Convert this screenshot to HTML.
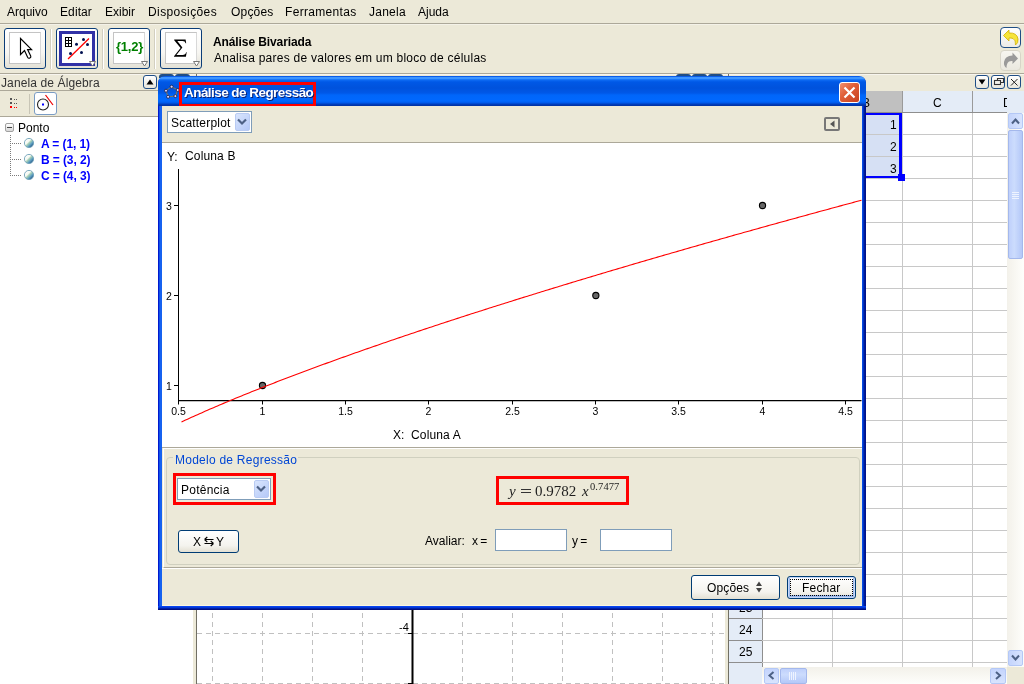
<!DOCTYPE html><html><head><meta charset="utf-8"><style>
html,body{margin:0;padding:0;}
body{width:1024px;height:684px;overflow:hidden;position:relative;background:#ECE9D8;font-family:"Liberation Sans",sans-serif;}
div{box-sizing:border-box;}
svg{position:absolute;overflow:visible;}
</style></head><body>
<div style="position:absolute;left:7px;top:6.13px;font:400 12px/13.80px 'Liberation Sans', sans-serif;color:#000;white-space:pre;will-change:transform;letter-spacing:0px;">Arquivo</div>
<div style="position:absolute;left:60px;top:6.13px;font:400 12px/13.80px 'Liberation Sans', sans-serif;color:#000;white-space:pre;will-change:transform;letter-spacing:0.1px;">Editar</div>
<div style="position:absolute;left:105px;top:6.13px;font:400 12px/13.80px 'Liberation Sans', sans-serif;color:#000;white-space:pre;will-change:transform;letter-spacing:0px;">Exibir</div>
<div style="position:absolute;left:148px;top:6.13px;font:400 12px/13.80px 'Liberation Sans', sans-serif;color:#000;white-space:pre;will-change:transform;letter-spacing:0.4px;">Disposições</div>
<div style="position:absolute;left:230.7px;top:6.13px;font:400 12px/13.80px 'Liberation Sans', sans-serif;color:#000;white-space:pre;will-change:transform;letter-spacing:0.2px;">Opções</div>
<div style="position:absolute;left:285px;top:6.13px;font:400 12px/13.80px 'Liberation Sans', sans-serif;color:#000;white-space:pre;will-change:transform;letter-spacing:0.32px;">Ferramentas</div>
<div style="position:absolute;left:369px;top:6.13px;font:400 12px/13.80px 'Liberation Sans', sans-serif;color:#000;white-space:pre;will-change:transform;letter-spacing:0.25px;">Janela</div>
<div style="position:absolute;left:418px;top:6.13px;font:400 12px/13.80px 'Liberation Sans', sans-serif;color:#000;white-space:pre;will-change:transform;letter-spacing:0px;">Ajuda</div>
<div style="position:absolute;left:0px;top:23px;width:1024px;height:1px;background:#ACA899"></div>
<div style="position:absolute;left:0px;top:24px;width:1024px;height:1px;background:#F4F2E8"></div>
<div style="position:absolute;left:4px;top:28px;width:42px;height:41px;border:1px solid #0B3D78;border-radius:3px;background:linear-gradient(#FFFFFF 0%,#F7F6F2 60%,#E3E1D6 100%)"></div>
<div style="position:absolute;left:9px;top:32px;width:32px;height:32px;border:1px solid #C4C4C4;border-right-color:#D8D8D8;background:#fff"></div>
<div style="position:absolute;left:56px;top:28px;width:42px;height:41px;border:1px solid #0B3D78;border-radius:3px;background:linear-gradient(#FFFFFF 0%,#F7F6F2 60%,#E3E1D6 100%)"></div>
<div style="position:absolute;left:59px;top:31px;width:36px;height:35px;border:3px solid #3131A6;background:#fff"></div>
<div style="position:absolute;left:108px;top:28px;width:42px;height:41px;border:1px solid #0B3D78;border-radius:3px;background:linear-gradient(#FFFFFF 0%,#F7F6F2 60%,#E3E1D6 100%)"></div>
<div style="position:absolute;left:113px;top:32px;width:32px;height:32px;border:1px solid #C4C4C4;border-right-color:#D8D8D8;background:#fff"></div>
<div style="position:absolute;left:160px;top:28px;width:42px;height:41px;border:1px solid #0B3D78;border-radius:3px;background:linear-gradient(#FFFFFF 0%,#F7F6F2 60%,#E3E1D6 100%)"></div>
<div style="position:absolute;left:165px;top:32px;width:32px;height:32px;border:1px solid #C4C4C4;border-right-color:#D8D8D8;background:#fff"></div>
<div style="position:absolute;left:50px;top:29px;width:1px;height:40px;background:#D2CFC0"></div>
<div style="position:absolute;left:51px;top:29px;width:1px;height:40px;background:#FFFFFF"></div>
<div style="position:absolute;left:102px;top:29px;width:1px;height:40px;background:#D2CFC0"></div>
<div style="position:absolute;left:103px;top:29px;width:1px;height:40px;background:#FFFFFF"></div>
<div style="position:absolute;left:154px;top:29px;width:1px;height:40px;background:#D2CFC0"></div>
<div style="position:absolute;left:155px;top:29px;width:1px;height:40px;background:#FFFFFF"></div>
<svg style="left:0;top:0" width="1024" height="684" viewBox="0 0 1024 684"><path d="M20.5 38.5 V54.5 L24.5 50.5 L27.6 57.3 Q28.3 58.6 29.5 58.1 L30.2 57.8 Q31.2 57.2 30.7 56.1 L27.6 49.6 H31.6 Z" fill="#fff" stroke="#000" stroke-width="1.15" stroke-linejoin="miter"/><g fill="none" stroke="#000" stroke-width="1"><rect x="65.5" y="37.5" width="6" height="9"/><line x1="68.5" y1="37.5" x2="68.5" y2="46.5"/><line x1="65.5" y1="40.5" x2="71.5" y2="40.5"/><line x1="65.5" y1="43.5" x2="71.5" y2="43.5"/></g><line x1="68" y1="59" x2="89" y2="38.5" stroke="#F00" stroke-width="1.3"/><g fill="#001050"><circle cx="70.5" cy="53.5" r="1.5"/><circle cx="76.5" cy="44.2" r="1.5"/><circle cx="83.5" cy="39.4" r="1.5"/><circle cx="87.5" cy="44.4" r="1.5"/><circle cx="81.5" cy="52.4" r="1.5"/></g><path d="M89.5 61.5 L95.5 61.5 L92.5 66 Z" fill="#fff" stroke="#777" stroke-width="1"/><path d="M141.5 61.5 L147.5 61.5 L144.5 66 Z" fill="#fff" stroke="#777" stroke-width="1"/><path d="M193.5 61.5 L199.5 61.5 L196.5 66 Z" fill="#fff" stroke="#777" stroke-width="1"/></svg>
<div style="position:absolute;left:115.5px;top:40.23px;font:700 13px/14.95px 'Liberation Sans', sans-serif;color:#008000;white-space:pre;will-change:transform;letter-spacing:-0.25px;">{1,2}</div>
<svg style="left:0;top:0" width="1024" height="684"><path d="M174.2 39.6 H185.6 L186.2 43.2 H185.6 Q185.2 41 182.5 41 H177.3 L182.4 47.6 L176.4 55 H182.6 Q185.6 55 186.1 52.3 H186.7 L185.9 56.7 H174 V56.2 L180.6 48.1 L174.2 40.2 Z" fill="#000"/></svg>
<div style="position:absolute;left:213px;top:36.13px;font:700 12px/13.80px 'Liberation Sans', sans-serif;color:#000;white-space:pre;will-change:transform;letter-spacing:-0.1px;">Análise Bivariada</div>
<div style="position:absolute;left:213.5px;top:52.13px;font:400 12px/13.80px 'Liberation Sans', sans-serif;color:#000;white-space:pre;will-change:transform;letter-spacing:0.25px;">Analisa pares de valores em um bloco de células</div>
<div style="position:absolute;left:1000px;top:27px;width:21px;height:21px;border:1px solid #1F4E86;border-radius:4px;background:linear-gradient(#fff,#ECEBE6)"></div>
<div style="position:absolute;left:1000px;top:50px;width:21px;height:21px;border:1px solid #D8D5C8;border-radius:4px;background:linear-gradient(#F7F6F0,#EAE8DF)"></div>
<svg style="left:0;top:0" width="1024" height="684"><path d="M1003.5 35.5 L1009 30 L1009 33 Q1017 32.5 1018 39 Q1018.5 43 1015.5 45 Q1016 40 1013 38.5 Q1011 37.8 1009 38 L1009 41 Z" fill="#F6E43A" stroke="#D2B000" stroke-width="0.8"/><path d="M1018 58.5 L1012.5 52.5 L1012.5 55.5 Q1005 55.5 1004 62 Q1003.5 66 1006.5 68 Q1006.5 63 1009 61.5 Q1010.5 60.8 1012.5 61 L1012.5 64 Z" fill="#9A9A9A"/></svg>
<div style="position:absolute;left:0px;top:73px;width:1024px;height:1px;background:#ACA899"></div>
<div style="position:absolute;left:0px;top:74px;width:1024px;height:1px;background:#F7F5EE"></div>
<div style="position:absolute;left:1px;top:77.13px;font:400 12px/13.80px 'Liberation Sans', sans-serif;color:#333333;white-space:pre;will-change:transform;letter-spacing:0.12px;">Janela de Álgebra</div>
<div style="position:absolute;left:143px;top:75px;width:14px;height:14px;border:1px solid #1F4E86;border-radius:3px;background:linear-gradient(#FFFFFF,#E8E6DC)"></div>
<svg style="left:0;top:0" width="1024" height="684"><path d="M146.5 84.5 L153.5 84.5 L150 79.5 Z" fill="#000"/></svg>
<div style="position:absolute;left:676px;top:74px;width:15px;height:4px;background:#1F4E86;border-radius:3px 3px 0 0"></div>
<div style="position:absolute;left:692px;top:74px;width:15px;height:4px;background:#1F4E86;border-radius:3px 3px 0 0"></div>
<div style="position:absolute;left:708px;top:74px;width:15px;height:4px;background:#1F4E86;border-radius:3px 3px 0 0"></div>
<div style="position:absolute;left:159px;top:74px;width:15px;height:4px;background:#1F4E86;border-radius:3px 3px 0 0"></div>
<div style="position:absolute;left:175px;top:74px;width:15px;height:4px;background:#1F4E86;border-radius:3px 3px 0 0"></div>
<div style="position:absolute;left:975px;top:75px;width:14px;height:14px;border:1px solid #1F4E86;border-radius:3px;background:linear-gradient(#FFFFFF,#E8E6DC)"></div>
<div style="position:absolute;left:991px;top:75px;width:14px;height:14px;border:1px solid #1F4E86;border-radius:3px;background:linear-gradient(#FFFFFF,#E8E6DC)"></div>
<div style="position:absolute;left:1007px;top:75px;width:14px;height:14px;border:1px solid #1F4E86;border-radius:3px;background:linear-gradient(#FFFFFF,#E8E6DC)"></div>
<svg style="left:0;top:0" width="1024" height="684"><path d="M978.5 79.5 L985.5 79.5 L982 84.5 Z" fill="#000"/><rect x="994.5" y="80.5" width="6" height="4" fill="none" stroke="#333" stroke-width="1.1"/><path d="M997.5 80 V78.5 H1003.5 V82.5 H1001" fill="none" stroke="#333" stroke-width="1.1"/><path d="M1011 79 L1017.5 85.5 M1017.5 79 L1011 85.5" stroke="#222" stroke-width="1"/></svg>
<div style="position:absolute;left:0px;top:90px;width:729px;height:1px;background:#ACA899"></div>
<div style="position:absolute;left:29px;top:94px;width:1px;height:20px;background:#C8C5B6"></div>
<div style="position:absolute;left:34px;top:92px;width:23px;height:23px;border:1px solid #7A9CC4;border-radius:3px;background:#fff"></div>
<svg style="left:0;top:0" width="1024" height="684"><g fill="#555"><rect x="10" y="98" width="2" height="2"/><rect x="10" y="102" width="2" height="2"/><rect x="14" y="99" width="1" height="1"/><rect x="16" y="99" width="1" height="1"/><rect x="14" y="103" width="1" height="1"/><rect x="16" y="103" width="1" height="1"/></g><g fill="#F00"><rect x="10" y="106" width="2" height="2"/><rect x="14" y="107" width="1" height="1"/><rect x="16" y="107" width="1" height="1"/></g><circle cx="43" cy="104.5" r="5.5" fill="none" stroke="#222" stroke-width="1.1"/><rect x="42" y="103.5" width="2" height="2" fill="#00F"/><line x1="45.5" y1="95" x2="53" y2="105" stroke="#E00" stroke-width="1.2"/></svg>
<div style="position:absolute;left:0px;top:116px;width:194px;height:1px;background:#ACA899"></div>
<div style="position:absolute;left:0px;top:117px;width:193px;height:567px;background:#fff"></div>
<div style="position:absolute;left:5px;top:123px;width:9px;height:9px;border:1px solid #A0A0A0;border-radius:2px;background:linear-gradient(#FFFFFF,#D8D8D8)"></div>
<div style="position:absolute;left:7px;top:127px;width:5px;height:1px;background:#444"></div>
<div style="position:absolute;left:18px;top:122.13px;font:400 12px/13.80px 'Liberation Sans', sans-serif;color:#000;white-space:pre;will-change:transform;">Ponto</div>
<svg style="left:0;top:0" width="1024" height="684"><g fill="#7A7A7A"><rect x="10" y="135" width="1" height="1"/><rect x="10" y="137" width="1" height="1"/><rect x="10" y="139" width="1" height="1"/><rect x="10" y="141" width="1" height="1"/><rect x="10" y="143" width="1" height="1"/><rect x="10" y="145" width="1" height="1"/><rect x="10" y="147" width="1" height="1"/><rect x="10" y="149" width="1" height="1"/><rect x="10" y="151" width="1" height="1"/><rect x="10" y="153" width="1" height="1"/><rect x="10" y="155" width="1" height="1"/><rect x="10" y="157" width="1" height="1"/><rect x="10" y="159" width="1" height="1"/><rect x="10" y="161" width="1" height="1"/><rect x="10" y="163" width="1" height="1"/><rect x="10" y="165" width="1" height="1"/><rect x="10" y="167" width="1" height="1"/><rect x="10" y="169" width="1" height="1"/><rect x="10" y="171" width="1" height="1"/><rect x="10" y="173" width="1" height="1"/><rect x="10" y="175" width="1" height="1"/><rect x="12" y="143" width="1" height="1"/><rect x="14" y="143" width="1" height="1"/><rect x="16" y="143" width="1" height="1"/><rect x="18" y="143" width="1" height="1"/><rect x="20" y="143" width="1" height="1"/><rect x="12" y="159" width="1" height="1"/><rect x="14" y="159" width="1" height="1"/><rect x="16" y="159" width="1" height="1"/><rect x="18" y="159" width="1" height="1"/><rect x="20" y="159" width="1" height="1"/><rect x="12" y="175" width="1" height="1"/><rect x="14" y="175" width="1" height="1"/><rect x="16" y="175" width="1" height="1"/><rect x="18" y="175" width="1" height="1"/><rect x="20" y="175" width="1" height="1"/></g><defs><linearGradient id="ball" x1="0.15" y1="0.15" x2="0.85" y2="0.85"><stop offset="0" stop-color="#FFFFFF"/><stop offset="0.35" stop-color="#F4F8F0"/><stop offset="0.5" stop-color="#A8D0B8"/><stop offset="0.75" stop-color="#5A9CC0"/><stop offset="1" stop-color="#2A5A88"/></linearGradient></defs><circle cx="29" cy="143" r="4.6" fill="url(#ball)" stroke="#6FA2B8" stroke-width="0.9"/><circle cx="29" cy="159" r="4.6" fill="url(#ball)" stroke="#6FA2B8" stroke-width="0.9"/><circle cx="29" cy="175" r="4.6" fill="url(#ball)" stroke="#6FA2B8" stroke-width="0.9"/></svg>
<div style="position:absolute;left:41px;top:138.13px;font:700 12px/13.80px 'Liberation Sans', sans-serif;color:#0000FF;white-space:pre;will-change:transform;letter-spacing:-0.1px;">A = (1, 1)</div>
<div style="position:absolute;left:41px;top:154.13px;font:700 12px/13.80px 'Liberation Sans', sans-serif;color:#0000FF;white-space:pre;will-change:transform;letter-spacing:-0.1px;">B = (3, 2)</div>
<div style="position:absolute;left:41px;top:170.13px;font:700 12px/13.80px 'Liberation Sans', sans-serif;color:#0000FF;white-space:pre;will-change:transform;letter-spacing:-0.1px;">C = (4, 3)</div>
<div style="position:absolute;left:193px;top:117px;width:3px;height:567px;background:#ECE9D8"></div>
<div style="position:absolute;left:196px;top:74px;width:1px;height:610px;background:#716F64"></div>
<div style="position:absolute;left:725px;top:91px;width:3px;height:593px;background:#ECE9D8"></div>
<div style="position:absolute;left:728px;top:74px;width:1px;height:610px;background:#716F64"></div>
<svg style="left:197px;top:91px" width="528" height="593"><rect x="0" y="0" width="528" height="593" fill="#fff"/><line x1="15.5" y1="0" x2="15.5" y2="593" stroke="#C0C0C0" stroke-width="1" stroke-dasharray="5 4"/><line x1="65.5" y1="0" x2="65.5" y2="593" stroke="#C0C0C0" stroke-width="1" stroke-dasharray="5 4"/><line x1="115.5" y1="0" x2="115.5" y2="593" stroke="#C0C0C0" stroke-width="1" stroke-dasharray="5 4"/><line x1="165.5" y1="0" x2="165.5" y2="593" stroke="#C0C0C0" stroke-width="1" stroke-dasharray="5 4"/><line x1="215.5" y1="0" x2="215.5" y2="593" stroke="#C0C0C0" stroke-width="1" stroke-dasharray="5 4"/><line x1="265.5" y1="0" x2="265.5" y2="593" stroke="#C0C0C0" stroke-width="1" stroke-dasharray="5 4"/><line x1="315.5" y1="0" x2="315.5" y2="593" stroke="#C0C0C0" stroke-width="1" stroke-dasharray="5 4"/><line x1="365.5" y1="0" x2="365.5" y2="593" stroke="#C0C0C0" stroke-width="1" stroke-dasharray="5 4"/><line x1="415.5" y1="0" x2="415.5" y2="593" stroke="#C0C0C0" stroke-width="1" stroke-dasharray="5 4"/><line x1="465.5" y1="0" x2="465.5" y2="593" stroke="#C0C0C0" stroke-width="1" stroke-dasharray="5 4"/><line x1="515.5" y1="0" x2="515.5" y2="593" stroke="#C0C0C0" stroke-width="1" stroke-dasharray="5 4"/><line x1="0" y1="442.5" x2="528" y2="442.5" stroke="#C0C0C0" stroke-width="1" stroke-dasharray="5 4"/><line x1="0" y1="492.5" x2="528" y2="492.5" stroke="#C0C0C0" stroke-width="1" stroke-dasharray="5 4"/><line x1="0" y1="542.5" x2="528" y2="542.5" stroke="#C0C0C0" stroke-width="1" stroke-dasharray="5 4"/><line x1="0" y1="592.5" x2="528" y2="592.5" stroke="#C0C0C0" stroke-width="1" stroke-dasharray="5 4"/><line x1="215.5" y1="0" x2="215.5" y2="593" stroke="#000" stroke-width="2"/><line x1="211" y1="442.5" x2="215" y2="442.5" stroke="#000" stroke-width="1"/><line x1="211" y1="492.5" x2="215" y2="492.5" stroke="#000" stroke-width="1"/><line x1="211" y1="542.5" x2="215" y2="542.5" stroke="#000" stroke-width="1"/><line x1="211" y1="592.5" x2="215" y2="592.5" stroke="#000" stroke-width="1"/></svg>
<div style="position:absolute;left:398.5px;top:620.54px;font:400 11px/12.65px 'Liberation Sans', sans-serif;color:#000;white-space:pre;will-change:transform;">-4</div>
<div style="position:absolute;left:729px;top:91px;width:295px;height:593px;background:#fff;overflow:hidden"></div>
<div style="position:absolute;left:729px;top:91px;width:295px;height:22px;background:#E4ECF7"></div>
<div style="position:absolute;left:832px;top:91px;width:70px;height:22px;background:#C0C0C0"></div>
<div style="position:absolute;left:762px;top:91px;width:1px;height:22px;background:#9A9A9A"></div>
<div style="position:absolute;left:832px;top:91px;width:1px;height:22px;background:#9A9A9A"></div>
<div style="position:absolute;left:902px;top:91px;width:1px;height:22px;background:#9A9A9A"></div>
<div style="position:absolute;left:972px;top:91px;width:1px;height:22px;background:#9A9A9A"></div>
<div style="position:absolute;left:729px;top:112px;width:295px;height:1px;background:#8E8E8E"></div>
<div style="position:absolute;left:933px;top:97.13px;font:400 12px/13.80px 'Liberation Sans', sans-serif;color:#000;white-space:pre;will-change:transform;">C</div>
<div style="position:absolute;left:1003px;top:97.13px;font:400 12px/13.80px 'Liberation Sans', sans-serif;color:#000;white-space:pre;will-change:transform;">D</div>
<div style="position:absolute;left:1007px;top:91px;width:17px;height:22px;background:#E4ECF7"></div>
<div style="position:absolute;left:729px;top:113px;width:33px;height:571px;background:#E4ECF7"></div>
<div style="position:absolute;left:762px;top:113px;width:1px;height:554px;background:#8E8E8E"></div>
<div style="position:absolute;left:729px;top:134px;width:33px;height:1px;background:#8E8E8E"></div>
<div style="position:absolute;left:762px;top:134px;width:245px;height:1px;background:#C8C8C8"></div>
<div style="position:absolute;left:729px;top:156px;width:33px;height:1px;background:#8E8E8E"></div>
<div style="position:absolute;left:762px;top:156px;width:245px;height:1px;background:#C8C8C8"></div>
<div style="position:absolute;left:729px;top:178px;width:33px;height:1px;background:#8E8E8E"></div>
<div style="position:absolute;left:762px;top:178px;width:245px;height:1px;background:#C8C8C8"></div>
<div style="position:absolute;left:729px;top:200px;width:33px;height:1px;background:#8E8E8E"></div>
<div style="position:absolute;left:762px;top:200px;width:245px;height:1px;background:#C8C8C8"></div>
<div style="position:absolute;left:729px;top:222px;width:33px;height:1px;background:#8E8E8E"></div>
<div style="position:absolute;left:762px;top:222px;width:245px;height:1px;background:#C8C8C8"></div>
<div style="position:absolute;left:729px;top:244px;width:33px;height:1px;background:#8E8E8E"></div>
<div style="position:absolute;left:762px;top:244px;width:245px;height:1px;background:#C8C8C8"></div>
<div style="position:absolute;left:729px;top:266px;width:33px;height:1px;background:#8E8E8E"></div>
<div style="position:absolute;left:762px;top:266px;width:245px;height:1px;background:#C8C8C8"></div>
<div style="position:absolute;left:729px;top:288px;width:33px;height:1px;background:#8E8E8E"></div>
<div style="position:absolute;left:762px;top:288px;width:245px;height:1px;background:#C8C8C8"></div>
<div style="position:absolute;left:729px;top:310px;width:33px;height:1px;background:#8E8E8E"></div>
<div style="position:absolute;left:762px;top:310px;width:245px;height:1px;background:#C8C8C8"></div>
<div style="position:absolute;left:729px;top:332px;width:33px;height:1px;background:#8E8E8E"></div>
<div style="position:absolute;left:762px;top:332px;width:245px;height:1px;background:#C8C8C8"></div>
<div style="position:absolute;left:729px;top:354px;width:33px;height:1px;background:#8E8E8E"></div>
<div style="position:absolute;left:762px;top:354px;width:245px;height:1px;background:#C8C8C8"></div>
<div style="position:absolute;left:729px;top:376px;width:33px;height:1px;background:#8E8E8E"></div>
<div style="position:absolute;left:762px;top:376px;width:245px;height:1px;background:#C8C8C8"></div>
<div style="position:absolute;left:729px;top:398px;width:33px;height:1px;background:#8E8E8E"></div>
<div style="position:absolute;left:762px;top:398px;width:245px;height:1px;background:#C8C8C8"></div>
<div style="position:absolute;left:729px;top:420px;width:33px;height:1px;background:#8E8E8E"></div>
<div style="position:absolute;left:762px;top:420px;width:245px;height:1px;background:#C8C8C8"></div>
<div style="position:absolute;left:729px;top:442px;width:33px;height:1px;background:#8E8E8E"></div>
<div style="position:absolute;left:762px;top:442px;width:245px;height:1px;background:#C8C8C8"></div>
<div style="position:absolute;left:729px;top:464px;width:33px;height:1px;background:#8E8E8E"></div>
<div style="position:absolute;left:762px;top:464px;width:245px;height:1px;background:#C8C8C8"></div>
<div style="position:absolute;left:729px;top:486px;width:33px;height:1px;background:#8E8E8E"></div>
<div style="position:absolute;left:762px;top:486px;width:245px;height:1px;background:#C8C8C8"></div>
<div style="position:absolute;left:729px;top:508px;width:33px;height:1px;background:#8E8E8E"></div>
<div style="position:absolute;left:762px;top:508px;width:245px;height:1px;background:#C8C8C8"></div>
<div style="position:absolute;left:729px;top:530px;width:33px;height:1px;background:#8E8E8E"></div>
<div style="position:absolute;left:762px;top:530px;width:245px;height:1px;background:#C8C8C8"></div>
<div style="position:absolute;left:729px;top:552px;width:33px;height:1px;background:#8E8E8E"></div>
<div style="position:absolute;left:762px;top:552px;width:245px;height:1px;background:#C8C8C8"></div>
<div style="position:absolute;left:729px;top:574px;width:33px;height:1px;background:#8E8E8E"></div>
<div style="position:absolute;left:762px;top:574px;width:245px;height:1px;background:#C8C8C8"></div>
<div style="position:absolute;left:729px;top:596px;width:33px;height:1px;background:#8E8E8E"></div>
<div style="position:absolute;left:762px;top:596px;width:245px;height:1px;background:#C8C8C8"></div>
<div style="position:absolute;left:729px;top:618px;width:33px;height:1px;background:#8E8E8E"></div>
<div style="position:absolute;left:762px;top:618px;width:245px;height:1px;background:#C8C8C8"></div>
<div style="position:absolute;left:729px;top:640px;width:33px;height:1px;background:#8E8E8E"></div>
<div style="position:absolute;left:762px;top:640px;width:245px;height:1px;background:#C8C8C8"></div>
<div style="position:absolute;left:729px;top:662px;width:33px;height:1px;background:#8E8E8E"></div>
<div style="position:absolute;left:762px;top:662px;width:245px;height:1px;background:#C8C8C8"></div>
<div style="position:absolute;left:729px;top:684px;width:33px;height:1px;background:#8E8E8E"></div>
<div style="position:absolute;left:762px;top:684px;width:245px;height:1px;background:#C8C8C8"></div>
<div style="position:absolute;left:832px;top:113px;width:1px;height:571px;background:#C8C8C8"></div>
<div style="position:absolute;left:902px;top:113px;width:1px;height:571px;background:#C8C8C8"></div>
<div style="position:absolute;left:972px;top:113px;width:1px;height:571px;background:#C8C8C8"></div>
<div style="position:absolute;left:738.5px;top:624.13px;font:400 12px/13.80px 'Liberation Sans', sans-serif;color:#000;white-space:pre;will-change:transform;">24</div>
<div style="position:absolute;left:738.5px;top:646.13px;font:400 12px/13.80px 'Liberation Sans', sans-serif;color:#000;white-space:pre;will-change:transform;">25</div>
<div style="position:absolute;left:738.5px;top:602.13px;font:400 12px/13.80px 'Liberation Sans', sans-serif;color:#000;white-space:pre;will-change:transform;">23</div>
<div style="position:absolute;left:832px;top:113px;width:70px;height:65px;background:#D6E0F4"></div>
<div style="position:absolute;left:832px;top:134px;width:70px;height:1px;background:#C8C8C8"></div>
<div style="position:absolute;left:832px;top:156px;width:70px;height:1px;background:#C8C8C8"></div>
<div style="position:absolute;left:830px;top:113px;width:72px;height:2px;background:#0000FF"></div>
<div style="position:absolute;left:899px;top:113px;width:3px;height:65px;background:#0000FF"></div>
<div style="position:absolute;left:830px;top:176px;width:72px;height:2px;background:#0000FF"></div>
<div style="position:absolute;left:898px;top:174px;width:7px;height:7px;background:#0000FF"></div>
<div style="position:absolute;left:889.5px;top:119.13px;font:400 12px/13.80px 'Liberation Sans', sans-serif;color:#000;white-space:pre;will-change:transform;">1</div>
<div style="position:absolute;left:889.5px;top:141.13px;font:400 12px/13.80px 'Liberation Sans', sans-serif;color:#000;white-space:pre;will-change:transform;">2</div>
<div style="position:absolute;left:889.5px;top:163.13px;font:400 12px/13.80px 'Liberation Sans', sans-serif;color:#000;white-space:pre;will-change:transform;">3</div>
<div style="position:absolute;left:862px;top:97.13px;font:400 12px/13.80px 'Liberation Sans', sans-serif;color:#000;white-space:pre;will-change:transform;">B</div>
<div style="position:absolute;left:1007px;top:113px;width:17px;height:554px;background:linear-gradient(90deg,#F3F1EA,#FEFEFB)"></div>
<div style="position:absolute;left:1008px;top:113px;width:15px;height:16px;border:1px solid #B4C8F6;border-radius:2px;background:linear-gradient(90deg,#C4D4FC,#D8E4FE)"></div>
<div style="position:absolute;left:1008px;top:130px;width:15px;height:129px;border:1px solid #A4B8EC;border-radius:2px;background:linear-gradient(90deg,#BFD0FB,#CCDCFD 40%,#B4C8F8)"></div>
<div style="position:absolute;left:1008px;top:650px;width:15px;height:16px;border:1px solid #B4C8F6;border-radius:2px;background:linear-gradient(90deg,#C4D4FC,#D8E4FE)"></div>
<div style="position:absolute;left:762px;top:667px;width:262px;height:17px;background:linear-gradient(#F3F1EA,#FEFEFB)"></div>
<div style="position:absolute;left:729px;top:667px;width:33px;height:17px;background:#E4ECF7"></div>
<div style="position:absolute;left:764px;top:668px;width:15px;height:16px;border:1px solid #B4C8F6;border-radius:2px;background:linear-gradient(#C4D4FC,#D8E4FE)"></div>
<div style="position:absolute;left:780px;top:668px;width:27px;height:16px;border:1px solid #A4B8EC;border-radius:2px;background:linear-gradient(#BFD0FB,#CCDCFD 40%,#B4C8F8)"></div>
<div style="position:absolute;left:990px;top:668px;width:16px;height:16px;border:1px solid #B4C8F6;border-radius:2px;background:linear-gradient(#C4D4FC,#D8E4FE)"></div>
<div style="position:absolute;left:1007px;top:667px;width:17px;height:17px;background:#ECE9D8"></div>
<svg style="left:0;top:0" width="1024" height="684"><path d="M1012 123.5 L1015.5 119.5 L1019 123.5" fill="none" stroke="#4D6185" stroke-width="2"/><path d="M1012 655.5 L1015.5 659.5 L1019 655.5" fill="none" stroke="#4D6185" stroke-width="2"/><path d="M773.5 672 L769.5 675.5 L773.5 679" fill="none" stroke="#4D6185" stroke-width="2"/><path d="M996 672 L1000 675.5 L996 679" fill="none" stroke="#4D6185" stroke-width="2"/><g stroke="#EEF3FF" stroke-width="1"><path d="M1012 192.5 H1019 M1012 194.5 H1019 M1012 196.5 H1019 M1012 198.5 H1019"/><path d="M789.5 672 V680 M791.5 672 V680 M793.5 672 V680 M795.5 672 V680"/></g></svg>
<div style="position:absolute;left:158px;top:76px;width:708px;height:534px;background:linear-gradient(90deg,#0019CF 0,#0019CF 1px,#0A3FE0 1px,#1662F0 2px,#1662F0 4px,transparent 4px,transparent 704px,#0A55EE 704px,#0040D8 705px,#0022A8 706px,#00138C 707px);border-radius:7px 7px 0 0"></div>
<div style="position:absolute;left:158px;top:606px;width:708px;height:4px;background:linear-gradient(#0844F0 0,#0844F0 1px,#0038D8 1px,#0038D8 2px,#0020A8 2px,#0020A8 3px,#000E80 3px)"></div>
<div style="position:absolute;left:158px;top:76px;width:708px;height:30px;border-radius:7px 7px 0 0;background:linear-gradient(#0A5CE8 0,#0A5CE8 1px,#3D95FF 1px,#3D95FF 3px,#2080FF 3px,#0A66F0 4.5px,#0058E6 6px,#0052DC 12px,#0058E8 17px,#0066FA 19px,#0068FF 25px,#0058E8 27px,#0040C0 28px,#0030A0 30px)"></div>
<svg style="left:0;top:0" width="1024" height="684"><path d="M171.6 86.7 L177.7 90 L175.4 96.1 L168.1 96.8 L166 90.7 Z" fill="none" stroke="#8A7A50" stroke-width="1"/><g fill="#D8D0FA" stroke="#101030" stroke-width="0.7"><circle cx="171.6" cy="86.7" r="1.5"/><circle cx="177.7" cy="90" r="1.5"/><circle cx="175.4" cy="96.1" r="1.5"/><circle cx="168.1" cy="96.8" r="1.5"/><circle cx="166" cy="90.7" r="1.5"/></g></svg>
<div style="position:absolute;left:179px;top:82px;width:137px;height:25px;border:3px solid #FF0000;border-bottom-width:3px"></div>
<div style="position:absolute;left:183.5px;top:85.38px;font:700 13.5px/15.52px 'Liberation Sans', sans-serif;color:#FFFFFF;white-space:pre;will-change:transform;letter-spacing:-0.55px;text-shadow:1px 1px 0 #0A1E6E">Análise de Regressão</div>
<div style="position:absolute;left:839px;top:82px;width:21px;height:21px;border:1px solid #FFFFFF;border-radius:3px;background:linear-gradient(135deg,#F09070 0%,#E0603A 40%,#C8401C 100%)"></div>
<svg style="left:0;top:0" width="1024" height="684"><path d="M844.5 87.5 L854.5 97.5 M854.5 87.5 L844.5 97.5" stroke="#fff" stroke-width="2.2"/></svg>
<div style="position:absolute;left:162px;top:106px;width:700px;height:500px;background:#ECE9D8"></div>
<div style="position:absolute;left:162px;top:605px;width:700px;height:1px;background:#FBF6E0"></div>
<div style="position:absolute;left:167px;top:111px;width:85px;height:22px;border:1px solid #7F9DB9;background:#fff"></div>
<div style="position:absolute;left:235px;top:113px;width:15px;height:18px;border:1px solid #B9CBF3;border-radius:2px;background:linear-gradient(135deg,#D9E5FD,#B5C9F8)"></div>
<svg style="left:0;top:0" width="1024" height="684"><path d="M238 119.5 L242 123.5 L246 119.5" fill="none" stroke="#4D6185" stroke-width="2.2"/></svg>
<div style="position:absolute;left:171px;top:117.13px;font:400 12px/13.80px 'Liberation Sans', sans-serif;color:#000;white-space:pre;will-change:transform;letter-spacing:0.2px;">Scatterplot</div>
<div style="position:absolute;left:824px;top:117px;width:16px;height:14px;border:2px solid #777;border-radius:2px;background:#ECE9D8"></div>
<svg style="left:0;top:0" width="1024" height="684"><path d="M834.5 120.5 L834.5 127.5 L830 124 Z" fill="#555"/></svg>
<div style="position:absolute;left:162px;top:142px;width:700px;height:1px;background:#ACA899"></div>
<div style="position:absolute;left:162px;top:143px;width:700px;height:304px;background:#fff"></div>
<svg style="left:0;top:0" width="1024" height="684"><line x1="178.5" y1="169" x2="178.5" y2="401" stroke="#000" stroke-width="1"/><line x1="178" y1="400.6" x2="861.5" y2="400.6" stroke="#000" stroke-width="1.3"/><line x1="174" y1="385.5" x2="178" y2="385.5" stroke="#000" stroke-width="1"/><line x1="174" y1="295.5" x2="178" y2="295.5" stroke="#000" stroke-width="1"/><line x1="174" y1="205.5" x2="178" y2="205.5" stroke="#000" stroke-width="1"/><line x1="178.5" y1="400" x2="178.5" y2="404.5" stroke="#000" stroke-width="1"/><line x1="262.5" y1="400" x2="262.5" y2="404.5" stroke="#000" stroke-width="1"/><line x1="345.5" y1="400" x2="345.5" y2="404.5" stroke="#000" stroke-width="1"/><line x1="428.5" y1="400" x2="428.5" y2="404.5" stroke="#000" stroke-width="1"/><line x1="512.5" y1="400" x2="512.5" y2="404.5" stroke="#000" stroke-width="1"/><line x1="595.5" y1="400" x2="595.5" y2="404.5" stroke="#000" stroke-width="1"/><line x1="678.5" y1="400" x2="678.5" y2="404.5" stroke="#000" stroke-width="1"/><line x1="762.5" y1="400" x2="762.5" y2="404.5" stroke="#000" stroke-width="1"/><line x1="845.5" y1="400" x2="845.5" y2="404.5" stroke="#000" stroke-width="1"/><circle cx="262.5" cy="385.5" r="3.1" fill="#666" stroke="#000" stroke-width="1.1"/><circle cx="595.8399999999999" cy="295.5" r="3.1" fill="#666" stroke="#000" stroke-width="1.1"/><circle cx="762.51" cy="205.5" r="3.1" fill="#666" stroke="#000" stroke-width="1.1"/><polyline points="181.5,421.97 183.5,421.04 185.5,420.12 187.5,419.20 189.5,418.28 191.5,417.37 193.5,416.46 195.5,415.56 197.5,414.66 199.5,413.77 201.5,412.88 203.5,412.00 205.5,411.12 207.5,410.24 209.5,409.37 211.5,408.50 213.5,407.64 215.5,406.78 217.5,405.92 219.5,405.07 221.5,404.22 223.5,403.37 225.5,402.53 227.5,401.69 229.5,400.85 231.5,400.02 233.5,399.19 235.5,398.36 237.5,397.54 239.5,396.71 241.5,395.90 243.5,395.08 245.5,394.27 247.5,393.46 249.5,392.65 251.5,391.84 253.5,391.04 255.5,390.24 257.5,389.44 259.5,388.65 261.5,387.86 263.5,387.07 265.5,386.28 267.5,385.49 269.5,384.71 271.5,383.93 273.5,383.15 275.5,382.38 277.5,381.60 279.5,380.83 281.5,380.06 283.5,379.29 285.5,378.53 287.5,377.76 289.5,377.00 291.5,376.24 293.5,375.49 295.5,374.73 297.5,373.98 299.5,373.22 301.5,372.47 303.5,371.73 305.5,370.98 307.5,370.24 309.5,369.49 311.5,368.75 313.5,368.01 315.5,367.27 317.5,366.54 319.5,365.80 321.5,365.07 323.5,364.34 325.5,363.61 327.5,362.88 329.5,362.16 331.5,361.43 333.5,360.71 335.5,359.99 337.5,359.27 339.5,358.55 341.5,357.83 343.5,357.12 345.5,356.40 347.5,355.69 349.5,354.98 351.5,354.27 353.5,353.56 355.5,352.85 357.5,352.15 359.5,351.44 361.5,350.74 363.5,350.04 365.5,349.34 367.5,348.64 369.5,347.94 371.5,347.25 373.5,346.55 375.5,345.86 377.5,345.17 379.5,344.47 381.5,343.78 383.5,343.10 385.5,342.41 387.5,341.72 389.5,341.04 391.5,340.35 393.5,339.67 395.5,338.99 397.5,338.31 399.5,337.63 401.5,336.95 403.5,336.27 405.5,335.60 407.5,334.92 409.5,334.25 411.5,333.57 413.5,332.90 415.5,332.23 417.5,331.56 419.5,330.89 421.5,330.22 423.5,329.56 425.5,328.89 427.5,328.23 429.5,327.56 431.5,326.90 433.5,326.24 435.5,325.58 437.5,324.92 439.5,324.26 441.5,323.60 443.5,322.95 445.5,322.29 447.5,321.64 449.5,320.98 451.5,320.33 453.5,319.68 455.5,319.03 457.5,318.38 459.5,317.73 461.5,317.08 463.5,316.43 465.5,315.79 467.5,315.14 469.5,314.50 471.5,313.85 473.5,313.21 475.5,312.57 477.5,311.93 479.5,311.29 481.5,310.65 483.5,310.01 485.5,309.37 487.5,308.73 489.5,308.10 491.5,307.46 493.5,306.83 495.5,306.19 497.5,305.56 499.5,304.93 501.5,304.29 503.5,303.66 505.5,303.03 507.5,302.40 509.5,301.78 511.5,301.15 513.5,300.52 515.5,299.90 517.5,299.27 519.5,298.65 521.5,298.02 523.5,297.40 525.5,296.78 527.5,296.15 529.5,295.53 531.5,294.91 533.5,294.29 535.5,293.68 537.5,293.06 539.5,292.44 541.5,291.82 543.5,291.21 545.5,290.59 547.5,289.98 549.5,289.36 551.5,288.75 553.5,288.14 555.5,287.53 557.5,286.91 559.5,286.30 561.5,285.69 563.5,285.09 565.5,284.48 567.5,283.87 569.5,283.26 571.5,282.65 573.5,282.05 575.5,281.44 577.5,280.84 579.5,280.23 581.5,279.63 583.5,279.03 585.5,278.43 587.5,277.82 589.5,277.22 591.5,276.62 593.5,276.02 595.5,275.42 597.5,274.83 599.5,274.23 601.5,273.63 603.5,273.03 605.5,272.44 607.5,271.84 609.5,271.25 611.5,270.65 613.5,270.06 615.5,269.47 617.5,268.87 619.5,268.28 621.5,267.69 623.5,267.10 625.5,266.51 627.5,265.92 629.5,265.33 631.5,264.74 633.5,264.15 635.5,263.57 637.5,262.98 639.5,262.39 641.5,261.81 643.5,261.22 645.5,260.64 647.5,260.05 649.5,259.47 651.5,258.89 653.5,258.30 655.5,257.72 657.5,257.14 659.5,256.56 661.5,255.98 663.5,255.40 665.5,254.82 667.5,254.24 669.5,253.66 671.5,253.08 673.5,252.50 675.5,251.93 677.5,251.35 679.5,250.78 681.5,250.20 683.5,249.62 685.5,249.05 687.5,248.48 689.5,247.90 691.5,247.33 693.5,246.76 695.5,246.19 697.5,245.61 699.5,245.04 701.5,244.47 703.5,243.90 705.5,243.33 707.5,242.76 709.5,242.19 711.5,241.63 713.5,241.06 715.5,240.49 717.5,239.92 719.5,239.36 721.5,238.79 723.5,238.23 725.5,237.66 727.5,237.10 729.5,236.53 731.5,235.97 733.5,235.40 735.5,234.84 737.5,234.28 739.5,233.72 741.5,233.16 743.5,232.59 745.5,232.03 747.5,231.47 749.5,230.91 751.5,230.36 753.5,229.80 755.5,229.24 757.5,228.68 759.5,228.12 761.5,227.56 763.5,227.01 765.5,226.45 767.5,225.90 769.5,225.34 771.5,224.79 773.5,224.23 775.5,223.68 777.5,223.12 779.5,222.57 781.5,222.02 783.5,221.46 785.5,220.91 787.5,220.36 789.5,219.81 791.5,219.26 793.5,218.71 795.5,218.16 797.5,217.61 799.5,217.06 801.5,216.51 803.5,215.96 805.5,215.41 807.5,214.86 809.5,214.32 811.5,213.77 813.5,213.22 815.5,212.68 817.5,212.13 819.5,211.58 821.5,211.04 823.5,210.49 825.5,209.95 827.5,209.41 829.5,208.86 831.5,208.32 833.5,207.78 835.5,207.23 837.5,206.69 839.5,206.15 841.5,205.61 843.5,205.07 845.5,204.53 847.5,203.99 849.5,203.45 851.5,202.91 853.5,202.37 855.5,201.83 857.5,201.29 859.5,200.75 861.5,200.21" fill="none" stroke="#FF0000" stroke-width="1.1"/></svg>
<div style="position:absolute;left:165.6px;top:380.09px;font:400 10.5px/12.07px 'Liberation Sans', sans-serif;color:#000;white-space:pre;will-change:transform;">1</div>
<div style="position:absolute;left:165.6px;top:290.09px;font:400 10.5px/12.07px 'Liberation Sans', sans-serif;color:#000;white-space:pre;will-change:transform;">2</div>
<div style="position:absolute;left:165.6px;top:200.09px;font:400 10.5px/12.07px 'Liberation Sans', sans-serif;color:#000;white-space:pre;will-change:transform;">3</div>
<div style="position:absolute;left:158.5px;top:405px;width:40px;text-align:center;font:400 10.5px/12px 'Liberation Sans', sans-serif;color:#000">0.5</div>
<div style="position:absolute;left:242.5px;top:405px;width:40px;text-align:center;font:400 10.5px/12px 'Liberation Sans', sans-serif;color:#000">1</div>
<div style="position:absolute;left:325.5px;top:405px;width:40px;text-align:center;font:400 10.5px/12px 'Liberation Sans', sans-serif;color:#000">1.5</div>
<div style="position:absolute;left:408.5px;top:405px;width:40px;text-align:center;font:400 10.5px/12px 'Liberation Sans', sans-serif;color:#000">2</div>
<div style="position:absolute;left:492.5px;top:405px;width:40px;text-align:center;font:400 10.5px/12px 'Liberation Sans', sans-serif;color:#000">2.5</div>
<div style="position:absolute;left:575.5px;top:405px;width:40px;text-align:center;font:400 10.5px/12px 'Liberation Sans', sans-serif;color:#000">3</div>
<div style="position:absolute;left:658.5px;top:405px;width:40px;text-align:center;font:400 10.5px/12px 'Liberation Sans', sans-serif;color:#000">3.5</div>
<div style="position:absolute;left:742.5px;top:405px;width:40px;text-align:center;font:400 10.5px/12px 'Liberation Sans', sans-serif;color:#000">4</div>
<div style="position:absolute;left:825.5px;top:405px;width:40px;text-align:center;font:400 10.5px/12px 'Liberation Sans', sans-serif;color:#000">4.5</div>
<div style="position:absolute;left:167px;top:151.13px;font:400 12px/13.80px 'Liberation Sans', sans-serif;color:#000;white-space:pre;will-change:transform;">Y:</div>
<div style="position:absolute;left:185px;top:150.13px;font:400 12px/13.80px 'Liberation Sans', sans-serif;color:#000;white-space:pre;will-change:transform;letter-spacing:0.15px;">Coluna B</div>
<div style="position:absolute;left:393px;top:429.13px;font:400 12px/13.80px 'Liberation Sans', sans-serif;color:#000;white-space:pre;will-change:transform;">X:</div>
<div style="position:absolute;left:411px;top:429.13px;font:400 12px/13.80px 'Liberation Sans', sans-serif;color:#000;white-space:pre;will-change:transform;letter-spacing:0.15px;">Coluna A</div>
<div style="position:absolute;left:162px;top:447px;width:700px;height:1px;background:#ACA899"></div>
<div style="position:absolute;left:163px;top:448px;width:699px;height:120px;border-left:1px solid #fff;border-top:1px solid #fff;border-bottom:1px solid #ACA899"></div>
<div style="position:absolute;left:162px;top:568px;width:700px;height:1px;background:#fff"></div>
<div style="position:absolute;left:166px;top:457px;width:694px;height:108px;border:1px solid #D0D0BF;border-radius:4px"></div>
<div style="position:absolute;left:173px;top:452px;width:125px;height:8px;background:#ECE9D8"></div>
<div style="position:absolute;left:175px;top:454.13px;font:400 12px/13.80px 'Liberation Sans', sans-serif;color:#0046D5;white-space:pre;will-change:transform;letter-spacing:0.25px;">Modelo de Regressão</div>
<div style="position:absolute;left:173px;top:473px;width:103px;height:32px;border:3px solid #FF0000"></div>
<div style="position:absolute;left:177px;top:478px;width:94px;height:22px;border:1px solid #7F9DB9;background:#fff"></div>
<div style="position:absolute;left:254px;top:480px;width:15px;height:18px;border:1px solid #B9CBF3;border-radius:2px;background:linear-gradient(135deg,#D9E5FD,#B5C9F8)"></div>
<svg style="left:0;top:0" width="1024" height="684"><path d="M257 486.5 L261 490.5 L265 486.5" fill="none" stroke="#4D6185" stroke-width="2.2"/></svg>
<div style="position:absolute;left:181px;top:484.13px;font:400 12px/13.80px 'Liberation Sans', sans-serif;color:#000;white-space:pre;will-change:transform;letter-spacing:0.25px;">Potência</div>
<div style="position:absolute;left:496px;top:476px;width:133px;height:29px;border:3px solid #FF0000"></div>
<div style="position:absolute;left:509px;top:482.63px;font:400 15px/17.25px 'Liberation Serif', serif;color:#1E1E1E;white-space:pre;will-change:transform;"><i>y</i></div>
<div style="position:absolute;left:521px;top:489px;width:10px;height:1px;background:#333"></div>
<div style="position:absolute;left:521px;top:492px;width:10px;height:1px;background:#333"></div>
<div style="position:absolute;left:535px;top:482.63px;font:400 15px/17.25px 'Liberation Serif', serif;color:#1E1E1E;white-space:pre;will-change:transform;">0.9782</div>
<div style="position:absolute;left:582px;top:482.63px;font:400 15px/17.25px 'Liberation Serif', serif;color:#1E1E1E;white-space:pre;will-change:transform;"><i>x</i></div>
<div style="position:absolute;left:589.8px;top:481.14px;font:400 10.5px/12.07px 'Liberation Serif', serif;color:#1E1E1E;white-space:pre;will-change:transform;letter-spacing:0.1px;">0.7477</div>
<div style="position:absolute;left:178px;top:530px;width:61px;height:23px;border:1px solid #003C74;border-radius:3px;background:linear-gradient(#FFFFFF 0%,#F4F3EE 70%,#E3E0D3 100%)"></div>
<div style="position:absolute;left:193px;top:536.13px;font:400 12px/13.80px 'Liberation Sans', sans-serif;color:#000;white-space:pre;will-change:transform;">X</div>
<svg style="left:0;top:0" width="1024" height="684"><path d="M204.5 539.5 H213.5 M204.5 539.5 L207.3 537 M204.5 539.5 L207.3 542 M204.5 543.5 H213.5 M213.5 543.5 L210.7 541 M213.5 543.5 L210.7 546" stroke="#000" stroke-width="1.1" fill="none"/></svg>
<div style="position:absolute;left:216px;top:536.13px;font:400 12px/13.80px 'Liberation Sans', sans-serif;color:#000;white-space:pre;will-change:transform;">Y</div>
<div style="position:absolute;left:425px;top:535.13px;font:400 12px/13.80px 'Liberation Sans', sans-serif;color:#000;white-space:pre;will-change:transform;">Avaliar:</div>
<div style="position:absolute;left:472px;top:535.13px;font:400 12px/13.80px 'Liberation Sans', sans-serif;color:#000;white-space:pre;will-change:transform;letter-spacing:-0.5px;">x =</div>
<div style="position:absolute;left:495px;top:529px;width:72px;height:22px;border:1px solid #7F9DB9;background:#fff"></div>
<div style="position:absolute;left:572px;top:535.13px;font:400 12px/13.80px 'Liberation Sans', sans-serif;color:#000;white-space:pre;will-change:transform;letter-spacing:-0.5px;">y =</div>
<div style="position:absolute;left:600px;top:529px;width:72px;height:22px;border:1px solid #7F9DB9;background:#fff"></div>
<div style="position:absolute;left:691px;top:575px;width:89px;height:25px;border:1px solid #003C74;border-radius:3px;background:linear-gradient(#FFFFFF 0%,#F4F3EE 70%,#E3E0D3 100%)"></div>
<div style="position:absolute;left:707px;top:582.13px;font:400 12px/13.80px 'Liberation Sans', sans-serif;color:#000;white-space:pre;will-change:transform;letter-spacing:0.15px;">Opções</div>
<svg style="left:0;top:0" width="1024" height="684"><path d="M756 586 L759 581.5 L762 586 Z M756 588 L759 592.5 L762 588 Z" fill="#444"/></svg>
<div style="position:absolute;left:787px;top:576px;width:69px;height:23px;border:1px solid #003C74;border-radius:3px;background:linear-gradient(#FFFFFF 0%,#F4F3EE 70%,#E3E0D3 100%);box-shadow:inset 0 0 0 1px #C6D8F8,inset 0 -1px 0 2px #9BB8EC"></div>
<div style="position:absolute;left:790px;top:579px;width:63px;height:17px;border:1px dotted #000"></div>
<div style="position:absolute;left:802px;top:582.13px;font:400 12px/13.80px 'Liberation Sans', sans-serif;color:#000;white-space:pre;will-change:transform;letter-spacing:0.2px;">Fechar</div>
</body></html>
